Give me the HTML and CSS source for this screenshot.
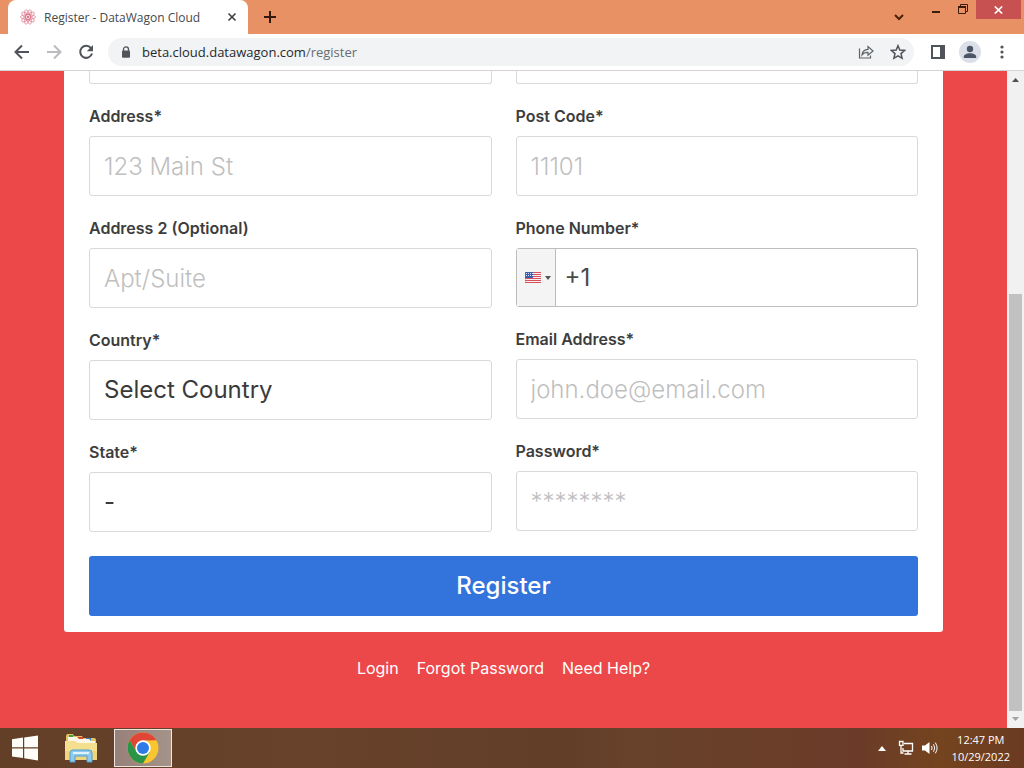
FILE: index.html
```html
<!DOCTYPE html>
<html lang="en">
<head>
<meta charset="utf-8">
<meta name="viewport" content="width=device-width, initial-scale=1">
<title>Register - DataWagon Cloud</title>
<link rel="stylesheet" href="styles.css">
</head>
<body class="desktop">
<header class="tabstrip">
  <div class="tab">
    <svg class="favicon" width="16" height="16" viewBox="0 0 16 16" fill="none" stroke="#d9667a" stroke-width=".6">
      <ellipse cx="8" cy="8" rx="7.6" ry="2.4"/>
      <ellipse cx="8" cy="8" rx="7.6" ry="2.4" transform="rotate(36 8 8)"/>
      <ellipse cx="8" cy="8" rx="7.6" ry="2.4" transform="rotate(72 8 8)"/>
      <ellipse cx="8" cy="8" rx="7.6" ry="2.4" transform="rotate(108 8 8)"/>
      <ellipse cx="8" cy="8" rx="7.6" ry="2.4" transform="rotate(144 8 8)"/>
      <circle cx="8" cy="8" r="1" fill="#d9667a"/>
    </svg>
    <span class="tab-title">Register - DataWagon Cloud</span>
    <button class="icon-btn tab-close" aria-label="Close tab">
      <svg width="10" height="10" viewBox="0 0 10 10" stroke="#3c4043" stroke-width="1.6"><path d="M1.500 1.500l7 7M8.500 1.500l-7 7"/></svg>
    </button>
  </div>
  <button class="icon-btn new-tab" aria-label="New tab">
    <svg width="12" height="12" viewBox="0 0 12 12" stroke="#33190f" stroke-width="2"><path d="M6 0v12M0 6h12"/></svg>
  </button>
  <button class="icon-btn tab-search" aria-label="Search tabs">
    <svg width="10" height="7" viewBox="0 0 10 7" fill="none" stroke="#4a2108" stroke-width="2"><path d="M1 1l4 4 4-4"/></svg>
  </button>
  <div class="window-controls">
    <button class="icon-btn win-min" aria-label="Minimize">
      <svg width="8" height="14" viewBox="0 0 8 14"><path d="M0 8h8v2H0z" fill="#3d1c0b"/></svg>
    </button>
    <button class="icon-btn win-restore" aria-label="Restore">
      <svg width="10" height="10" viewBox="0 0 10 10" fill="none" stroke="#3d1c0b"><path d="M2.500 2.500v-2h7v7h-2"/><path d="M.5 3h7v6.500h-7z"/><path d="M0 3h8" stroke-width="2"/></svg>
    </button>
    <button class="icon-btn win-close" aria-label="Close">
      <svg width="9" height="8" viewBox="0 0 9 8" stroke="#fff" stroke-width="1.700"><path d="M.8.5l7.400 7M8.200.5L.8 7.500"/></svg>
    </button>
  </div>
</header>

<nav class="toolbar" aria-label="Browser">
  <button class="icon-btn nav-btn" aria-label="Back">
    <svg width="16" height="16" viewBox="0 0 16 16" fill="none" stroke="#50545a" stroke-width="2"><path d="M15 8H2M8 1.500L1.500 8 8 14.500"/></svg>
  </button>
  <button class="icon-btn nav-btn" aria-label="Forward">
    <svg width="16" height="16" viewBox="0 0 16 16" fill="none" stroke="#b9bbbe" stroke-width="2"><path d="M1 8h13M8 1.500L14.500 8 8 14.500"/></svg>
  </button>
  <button class="icon-btn nav-btn" aria-label="Reload">
    <svg width="16" height="16" viewBox="0 0 16 16"><path d="M13 4.200A6 6 0 1 0 14 9.500" fill="none" stroke="#50545a" stroke-width="2"/><path d="M15 1v6.200H8.800z" fill="#50545a"/></svg>
  </button>
  <div class="omnibox">
    <svg class="lock" width="10" height="12" viewBox="0 0 10 12"><path d="M2.500 5V3.400a2.500 2.500 0 0 1 5 0V5" fill="none" stroke="#50545a" stroke-width="1.300"/><rect x="1" y="4.500" width="8" height="7.200" rx="1" fill="#50545a"/></svg>
    <span class="url">beta.cloud.datawagon.com<span class="url-path">/register</span></span>
    <button class="icon-btn share" aria-label="Share">
      <svg width="16" height="16" viewBox="0 0 16 16" fill="none" stroke="#5f6368" stroke-width="1.200"><path d="M1.500 4.500v9.500h11v-2.500"/><path d="M4 11c.4-3.800 2.500-5.400 6-5.600V2.500L15 7l-5 4.300V8.400C7.200 8.300 5.500 9 4 11z"/></svg>
    </button>
    <button class="icon-btn" aria-label="Bookmark">
      <svg width="16" height="16" viewBox="0 0 16 16" fill="none" stroke="#50545a" stroke-width="1.500"><path d="M8 1.700l1.800 4.400 4.800.4-3.600 3.100 1.100 4.700L8 11.800l-4.100 2.500L5 9.600 1.400 6.500l4.800-.4z"/></svg>
    </button>
  </div>
  <button class="icon-btn side-panel" aria-label="Side panel">
    <svg width="14" height="14" viewBox="0 0 14 14"><path d="M1 1h12v12H1z" fill="none" stroke="#50545a" stroke-width="2"/><path d="M9 0h5v14H9z" fill="#50545a"/></svg>
  </button>
  <button class="icon-btn profile" aria-label="Profile">
    <svg width="22" height="22" viewBox="0 0 22 22"><circle cx="11" cy="11" r="11" fill="#dbe0e8"/><circle cx="11" cy="8" r="3.200" fill="#4a5568"/><path d="M4.800 17v-1.500c0-2 3-3.300 6.200-3.300s6.200 1.300 6.200 3.300V17z" fill="#4a5568"/></svg>
  </button>
  <button class="icon-btn kebab" aria-label="Menu">
    <svg width="4" height="14" viewBox="0 0 4 14" fill="#50545a"><circle cx="2" cy="2" r="1.600"/><circle cx="2" cy="7" r="1.600"/><circle cx="2" cy="12" r="1.600"/></svg>
  </button>
</nav>

<div class="viewport">
  <main class="page">
    <form class="card">
      <div class="columns">
        <div class="column">
          <input class="input input-cut" type="text" aria-label="Company">
          <label class="label" for="address">Address*</label>
          <input class="input" id="address" type="text" placeholder="123 Main St">
          <label class="label" for="address2">Address 2 (Optional)</label>
          <input class="input" id="address2" type="text" placeholder="Apt/Suite">
          <label class="label" for="country">Country*</label>
          <select class="input" id="country"><option>Select Country</option></select>
          <label class="label" for="state">State*</label>
          <select class="input" id="state"><option>-</option></select>
        </div>
        <div class="column">
          <input class="input input-cut" type="text" aria-label="City">
          <label class="label" for="post">Post Code*</label>
          <input class="input" id="post" type="text" placeholder="11101">
          <label class="label" for="phone">Phone Number*</label>
          <div class="phone">
            <button class="flag-btn" type="button" aria-label="United States">
              <svg width="16" height="11" viewBox="0 0 16 11"><path d="M0 0h16v11H0z" fill="#f8eef0"/><path d="M0 .5h16M0 2.500h16M0 4.500h16M0 6.500h16M0 8.500h16M0 10.500h16" stroke="#d8505c"/><path d="M0 0h8v6H0z" fill="#3b5fae"/><path d="M1 1.500h7M1 3.500h7" stroke="#d5dff2" stroke-dasharray="1 1"/><path d="M0 0v11" stroke="#d8505c" stroke-width=".6"/></svg>
              <svg width="6" height="4" viewBox="0 0 6 4"><path d="M0 0h6L3 4z" fill="#555"/></svg>
            </button>
            <input class="phone-input" id="phone" type="tel" value="+1">
          </div>
          <label class="label" for="email">Email Address*</label>
          <input class="input" id="email" type="email" placeholder="john.doe@email.com">
          <label class="label" for="password">Password*</label>
          <input class="input" id="password" type="password" placeholder="********">
        </div>
      </div>
      <button class="register" type="submit">Register</button>
    </form>
    <nav class="links" aria-label="Account">
      <a href="#login">Login</a>
      <a href="#forgot">Forgot Password</a>
      <a href="#help">Need Help?</a>
    </nav>
  </main>
  <div class="scrollbar" aria-hidden="true">
    <svg width="7" height="4" viewBox="0 0 7 4"><path d="M0 4h7L3.500 0z" fill="#505050"/></svg>
    <div class="track"><div class="thumb"></div></div>
    <svg width="7" height="4" viewBox="0 0 7 4"><path d="M0 0h7L3.500 4z" fill="#a3a3a3"/></svg>
  </div>
</div>

<footer class="taskbar">
  <button class="icon-btn task" aria-label="Start">
    <svg width="28" height="26" viewBox="0 0 28 26" fill="#fffdf8"><path d="M1 4.200L12 2.600v9.600H1zM13.200 2.400L27 .5v11.700H13.200zM1 13.400h11V23L1 21.600zM13.200 13.400H27V25.500l-13.800-2.200z"/></svg>
  </button>
  <button class="icon-btn task" aria-label="File Explorer">
    <svg width="34" height="30" viewBox="0 0 34 30">
      <path d="M2 3q0-2 2-2h5l1 2h8l1 2h11q2 0 2 2v20H2z" fill="#e4c25f"/>
      <path d="M5 2h4v3H5z" fill="#3f9a4e"/><path d="M13 4h6v3h-6z" fill="#d1462f"/><path d="M22 5h5v3h-5z" fill="#3c83c6"/>
      <path d="M4 4h9l2 2h10l2 2h4v4H4z" fill="#fbf6e6"/>
      <path d="M1 8h10l3 2h19v17H1z" fill="#f4df8e"/>
      <path d="M1 18h32v9H1z" fill="#efd67d"/>
      <path d="M6 29V20q0-3 3-3h16q3 0 3 3v9h-5v-6H11v6z" fill="#8fc9ec" stroke="#4f9fd4"/>
      <path d="M9 20h16" stroke="#dff3fc" stroke-width="2"/>
    </svg>
  </button>
  <button class="icon-btn task task-active" aria-label="Google Chrome">
    <svg width="32" height="32" viewBox="0 0 32 32">
      <circle cx="16" cy="16" r="15.500" fill="#f9c62f"/>
      <path d="M2.580 8.250A15.500 15.500 0 0 1 29.420 8.250L16 8.500 9.500 19.750z" fill="#e04536"/>
      <path d="M2.580 8.250A15.500 15.500 0 0 0 16 31.500L22.700 19.900 16 16 9.500 19.750z" fill="#2b9448"/>
      <circle cx="16" cy="16" r="7.700" fill="#fff"/><circle cx="16" cy="16" r="6" fill="#2f7be6"/>
    </svg>
  </button>
  <div class="tray">
    <svg width="8" height="5" viewBox="0 0 8 5"><path d="M0 5h8L4 0z" fill="#fff"/></svg>
    <svg width="16" height="16" viewBox="0 0 16 16" fill="none" stroke="#fff" stroke-width="1.300"><path d="M6 3.500h8.500v7.500H5V8M6.500 14h7M10 11v3M3 6v7h2.500"/><path d="M1.500 1.500h3.500v3.800H1.500z"/></svg>
    <svg width="16" height="14" viewBox="0 0 16 14"><path d="M0 4.500h3L7.500 1v12L3 9.500H0z" fill="#fff"/><path d="M9.500 5q1.200 2 0 4M11.500 3.300q2.400 3.700 0 7.400M13.300 1.600q3.600 5.400 0 10.800" fill="none" stroke="#fff"/></svg>
    <div class="clock"><div>12:47 PM</div><div>10/29/2022</div></div>
  </div>
</footer>
</body>
</html>
```

FILE: styles.css
```css
* { box-sizing: border-box; }

.desktop {
  margin: 0;
  height: 100vh;
  display: flex;
  flex-direction: column;
  overflow: hidden;
  font-family: "Open Sans", "Noto Sans", sans-serif;
}

svg { display: block; flex: none; }

.icon-btn {
  display: flex;
  align-items: center;
  justify-content: center;
  flex: none;
  padding: 0;
  border: 0;
  background: none;
}

/* Tab strip */
.tabstrip {
  display: flex;
  align-items: flex-start;
  flex: none;
  height: 34px;
  padding: 0 3px 0 8px;
  background: #e79164;
}
.tab {
  display: flex;
  align-items: center;
  width: 240px;
  height: 34px;
  padding: 0 10px 0 12px;
  border-radius: 8px 8px 0 0;
  background: #fff;
}
.tab-title {
  flex: 1;
  margin-left: 8px;
  font-size: 12px;
  color: #45494d;
  white-space: nowrap;
}
.tab-close { width: 12px; height: 16px; }
.new-tab { width: 28px; height: 34px; margin-left: 8px; }
.tab-search { width: 20px; height: 34px; margin-left: auto; }
.window-controls {
  display: flex;
  margin-left: 14px;
}
.win-min { width: 26px; height: 20px; }
.win-restore { width: 27px; height: 18px; }
.win-close {
  width: 45px;
  height: 19px;
  background: #c75050;
}

/* Toolbar */
.toolbar {
  display: flex;
  align-items: center;
  flex: none;
  height: 37px;
  padding: 0 14px 0 6px;
  border-bottom: 1px solid #d5d3d3;
  background: #fff;
}
.nav-btn { width: 32px; height: 32px; }
.omnibox {
  display: flex;
  align-items: center;
  flex: 1;
  gap: 16px;
  height: 28px;
  margin-left: 6px;
  padding: 0 8px 0 13px;
  border-radius: 14px;
  background: #f1f3f4;
}
.url {
  flex: 1;
  margin-left: -5px;
  font-size: 13px;
  color: #26292c;
}
.url-path { color: #6a6d71; }
.side-panel { margin-left: 17px; }
.profile { margin-left: 14px; }
.kebab { width: 16px; margin-left: 13px; }

/* Browser viewport */
.viewport {
  display: flex;
  flex: 1;
  min-height: 0;
}
.page {
  flex: 1;
  overflow: hidden;
  padding: 0 64px;
  background: #ed4849;
  font-family: Inter, sans-serif;
}
.card {
  padding: 0 25px 16px;
  border-radius: 0 0 3px 3px;
  background: #fff;
}
.columns {
  display: grid;
  grid-template-columns: 1fr 1fr;
  gap: 24px;
}
.column { min-width: 0; }
.label {
  display: block;
  margin: 20px 0 8px;
  font-size: 16px;
  font-weight: 600;
  line-height: 24px;
  color: #3d3d3d;
}
.input {
  display: block;
  width: 100%;
  height: 60px;
  padding: 0 14px;
  border: 1px solid #d9d9d9;
  border-radius: 3px;
  background: #fff;
  appearance: none;
  font-family: inherit;
  font-size: 24px;
  color: #3a3a3a;
}
.input::placeholder {
  font-weight: 300;
  color: #bfbfbf;
  opacity: 1;
}
select.input { padding-bottom: 2px; }
.input-cut {
  height: 13px;
  border-top: 0;
  border-radius: 0 0 3px 3px;
}
.phone {
  display: flex;
  height: 59px;
  border: 1px solid #bdbdbd;
  border-radius: 3px;
}
.flag-btn {
  display: flex;
  align-items: center;
  gap: 4px;
  width: 39px;
  padding: 0 0 0 8px;
  border: 0;
  border-right: 1px solid #bdbdbd;
  background: #f4f4f4;
}
.phone-input {
  flex: 1;
  min-width: 0;
  padding: 0 9px;
  border: 0;
  background: none;
  font-family: inherit;
  font-size: 24px;
  color: #4a4a4a;
}
.register {
  display: block;
  width: 100%;
  height: 60px;
  margin-top: 24px;
  padding: 0 0 2px;
  border: 0;
  border-radius: 3px;
  background: #3273dc;
  font-family: inherit;
  font-size: 24px;
  font-weight: 500;
  color: #fff;
}
.links {
  display: flex;
  justify-content: center;
  gap: 18px;
  margin-top: 24px;
  font-size: 16px;
  line-height: 24px;
}
.links a {
  color: #fff;
  text-decoration: none;
}

.scrollbar {
  display: flex;
  flex-direction: column;
  align-items: center;
  gap: 6px;
  width: 17px;
  padding: 7px 0;
  background: #f1f1f1;
}
.track {
  display: flex;
  flex-direction: column;
  justify-content: flex-end;
  flex: 1;
  width: 13px;
}
.thumb {
  height: 67%;
  background: #c1c1c1;
}

/* Taskbar */
.taskbar {
  display: flex;
  flex: none;
  height: 40px;
  padding-right: 14px;
  background: linear-gradient(90deg, #633f27, #68422a 30%, #623d28 55%, #68422a 62%, #6b3b28 84%, #74441f 92%, #6b3a22);
}
.task { width: 50px; }
.task + .task { width: 62px; }
.task.task-active {
  width: 58px;
  margin: 1px 0 1px 2px;
  border: 1px solid #ece5e0;
  background: linear-gradient(90deg, #978079, #a59389);
}
.tray {
  display: flex;
  align-items: center;
  gap: 8px;
  margin-left: auto;
  color: #fff;
}
.tray svg:first-child { margin-right: 4px; }
.clock {
  margin-left: 6px;
  font-size: 11px;
  line-height: 17px;
  text-align: center;
}
```
